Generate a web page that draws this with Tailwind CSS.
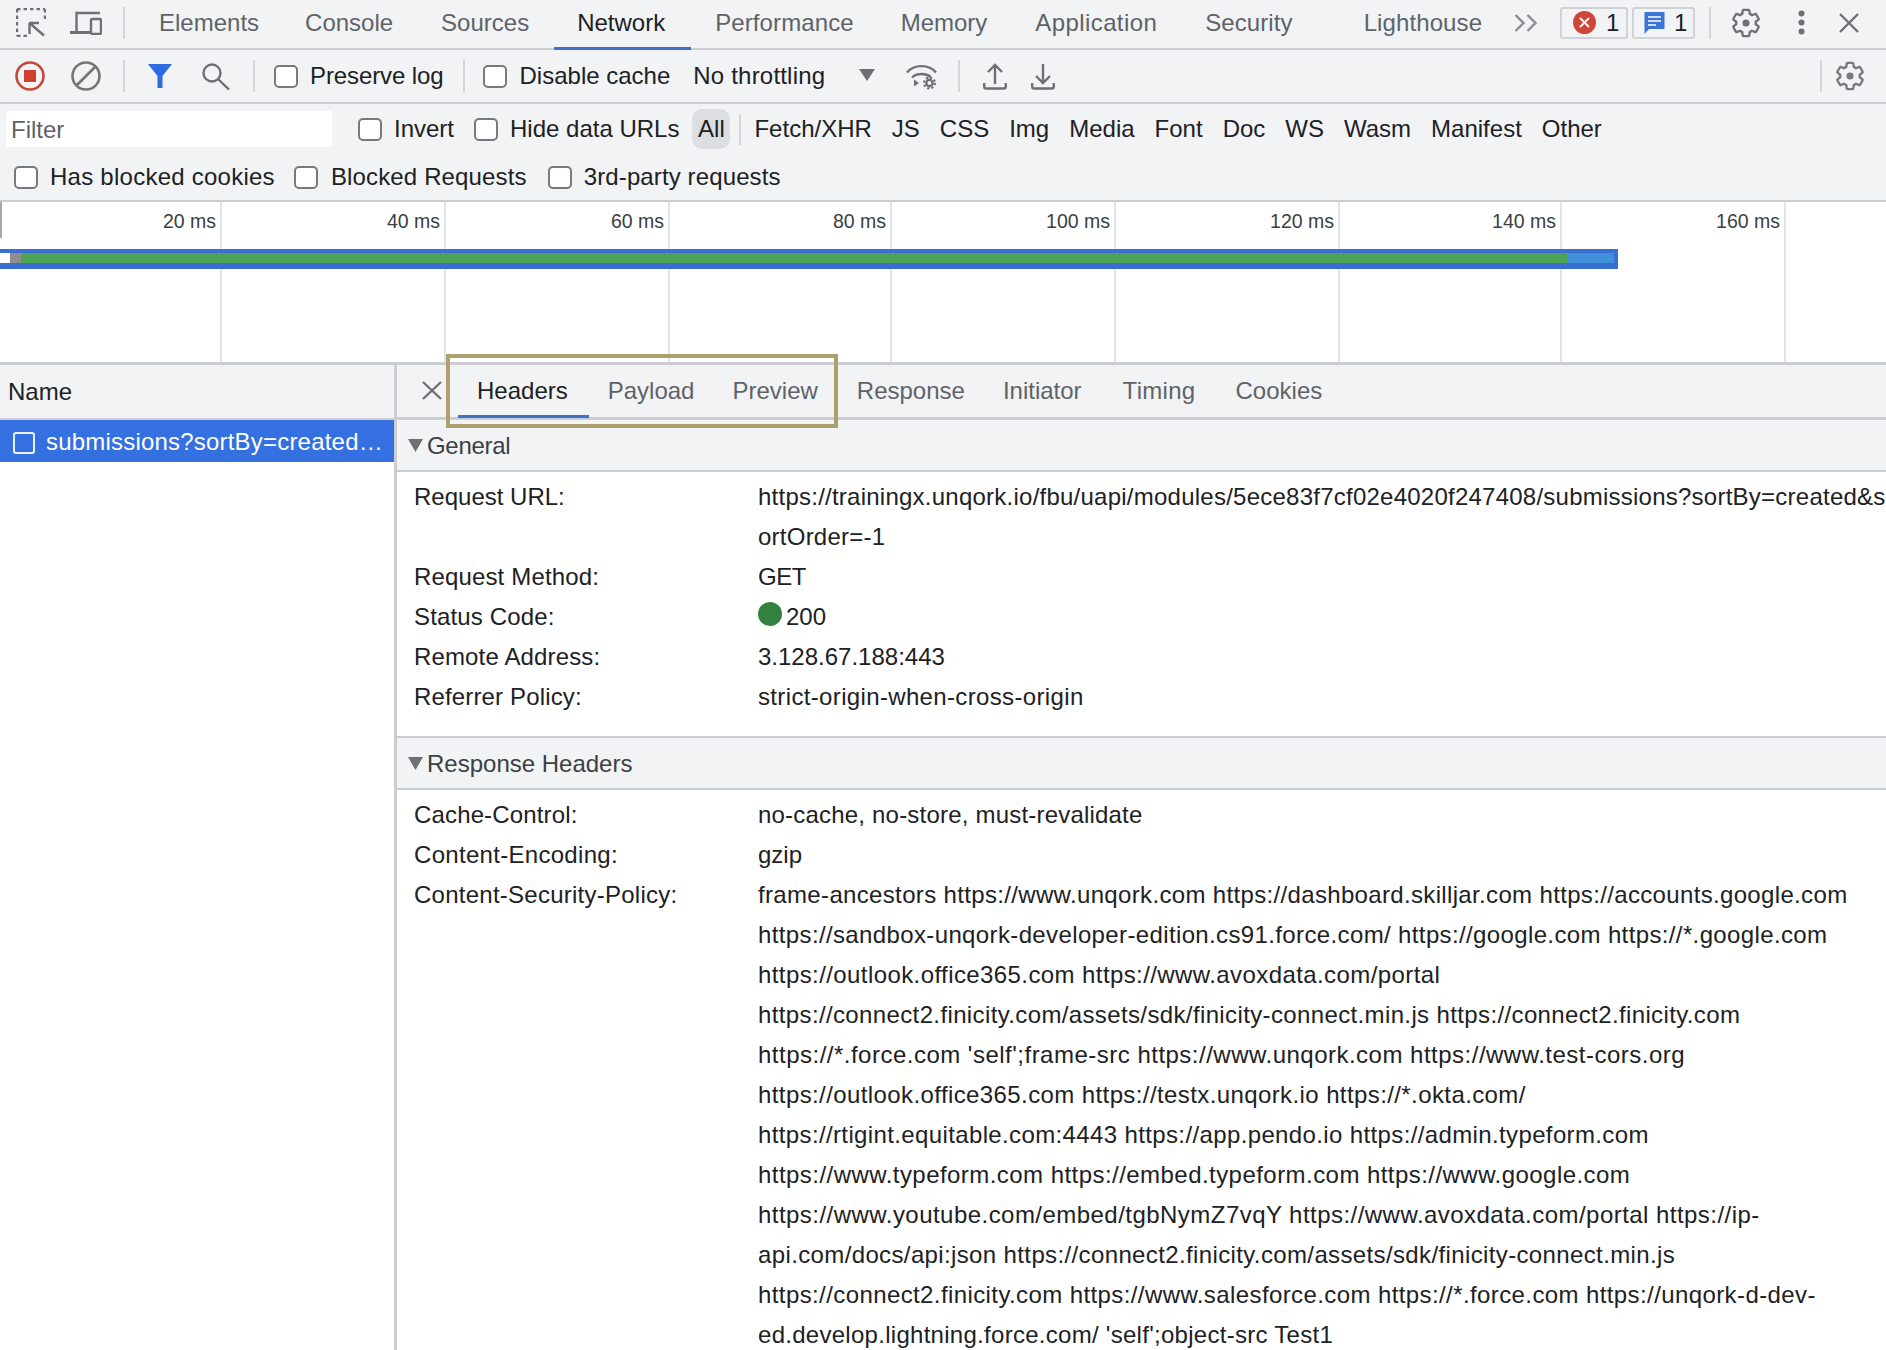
<!DOCTYPE html>
<html lang="en">
<head>
  <meta charset="UTF-8" />
  <title>DevTools Network panel</title>
  <script src="https://cdn.jsdelivr.net/npm/@tailwindcss/browser@4"></script>
</head>
<body class="bg-white">
<div class="relative w-[1886px] h-[1350px] overflow-hidden font-['Liberation_Sans',Arial,sans-serif] text-[24px] leading-none text-[#202124] whitespace-nowrap">

  <!-- Top tab bar -->
  <div class="flex items-center h-[50px] pb-[3px] bg-[#f1f3f5] border-b-2 border-[#cbcdd1] text-[#5f6368]">
    <svg class="ml-[16px] shrink-0" width="30" height="29" viewBox="0 0 30 29" fill="none" stroke="#6e7074" stroke-width="2.4">
      <path d="M1 1h28M1 1v27M29 1v12M1 28h10" stroke-dasharray="3.5 3"/>
      <path d="M13 15h10M13.500 15v11M14 15.500l14 12" stroke="#6e7074"/>
    </svg>
    <svg class="ml-[24px] shrink-0" width="32" height="24" viewBox="0 0 32 24" fill="none" stroke="#6e7074" stroke-width="2.400">
      <path d="M30 2H6.500v19"/>
      <path d="M0 21.500h20" stroke-width="3"/>
      <rect x="21" y="8" width="10" height="15" rx="1.500"/>
    </svg>
    <div class="ml-[21px] w-[2px] h-[32px] bg-[#d3d5d8]"></div>
    <span class="ml-[34px]">Elements</span>
    <span class="ml-[46px]">Console</span>
    <span class="ml-[48px]">Sources</span>
    <span class="relative self-stretch flex items-center ml-[48px] text-[#202124]">Network<span class="absolute -bottom-[5px] -left-[23px] -right-[26px] h-[3px] bg-[#3e6fc9]"></span></span>
    <span class="ml-[50px] tracking-[0.1px]">Performance</span>
    <span class="ml-[47px]">Memory</span>
    <span class="ml-[48px] tracking-[0.4px]">Application</span>
    <span class="ml-[48px] tracking-[0.1px]">Security</span>
    <span class="ml-[71px] tracking-[0.1px]">Lighthouse</span>
    <svg class="ml-[32px] shrink-0" width="24" height="18" viewBox="0 0 24 18" fill="none" stroke="#8a8c90" stroke-width="2.400">
      <path d="M1.500 1l8 8-8 8M13.500 1l8 8-8 8"/>
    </svg>
    <div class="ml-[22px] w-[68px] h-[32px] flex items-center border-2 border-[#d0d2d5] rounded-[3px] text-[#202124]">
      <svg class="ml-[11px] shrink-0" width="23" height="23" viewBox="0 0 23 23">
        <circle cx="11.500" cy="11.500" r="11.500" fill="#d0453a"/>
        <path d="M7 7l9 9M16 7l-9 9" stroke="#fff" stroke-width="1.800"/>
      </svg>
      <span class="ml-[10px]">1</span>
    </div>
    <div class="ml-[4px] w-[63px] h-[32px] flex items-center border-2 border-[#d0d2d5] rounded-[3px] text-[#202124]">
      <svg class="ml-[10px] shrink-0" width="21" height="24" viewBox="0 0 21 24">
        <path d="M1.500 1h18a1 1 0 0 1 1 1v15a1 1 0 0 1-1 1H5l-4.500 5V2a1 1 0 0 1 1-1z" fill="#3b73d9"/>
        <path d="M4 6h13M4 10h13M4 14h8" stroke="#fff" stroke-width="1.600"/>
      </svg>
      <span class="ml-[9px]">1</span>
    </div>
    <div class="ml-[14px] w-[2px] h-[32px] bg-[#d3d5d8]"></div>
    <svg class="ml-[20px] shrink-0" width="30" height="30" viewBox="1.500 1 21 22">
      <path d="M19.140 12.940c.04-.3.06-.61.06-.94 0-.32-.02-.64-.07-.94l2.030-1.580c.18-.14.23-.41.12-.61l-1.920-3.320c-.12-.22-.37-.29-.59-.22l-2.390.96c-.5-.38-1.030-.7-1.620-.94l-.36-2.540c-.04-.24-.24-.41-.48-.41h-3.840c-.24 0-.43.17-.47.41l-.36 2.540c-.59.24-1.130.57-1.620.94l-2.390-.96c-.22-.08-.47 0-.59.22L2.740 8.870c-.12.21-.08.47.12.61l2.030 1.580c-.05.3-.09.63-.09.94s.02.64.07.94l-2.030 1.580c-.18.14-.23.41-.12.61l1.920 3.320c.12.22.37.29.59.22l2.390-.96c.5.38 1.030.7 1.620.94l.36 2.540c.05.24.24.41.48.41h3.840c.24 0 .44-.17.47-.41l.36-2.540c.59-.24 1.130-.56 1.620-.94l2.390.96c.22.08.47 0 .59-.22l1.920-3.320c.12-.22.07-.47-.12-.61l-2.010-1.580z" fill="none" stroke="#6e7074" stroke-width="1.700"/>
      <circle cx="12" cy="12" r="2.600" fill="#6e7074"/>
    </svg>
    <svg class="ml-[37px] shrink-0" width="7" height="25" viewBox="0 0 7 25" fill="#6e7074">
      <circle cx="3.500" cy="3.500" r="3"/><circle cx="3.500" cy="12.500" r="3"/><circle cx="3.500" cy="21.500" r="3"/>
    </svg>
    <svg class="ml-[34px] shrink-0" width="20" height="20" viewBox="0 0 20 20" fill="none" stroke="#6e7074" stroke-width="2.400">
      <path d="M1 1l18 18M19 1L1 19"/>
    </svg>
  </div>

  <!-- Record / throttling toolbar -->
  <div class="flex items-center h-[54px] bg-[#f1f3f5] border-b-2 border-[#cbcdd1]">
    <svg class="ml-[15px] shrink-0" width="30" height="30" viewBox="0 0 30 30">
      <circle cx="15" cy="15" r="13.500" fill="none" stroke="#c5493a" stroke-width="2.600"/>
      <rect x="9" y="9" width="12" height="12" fill="#d0402f"/>
    </svg>
    <svg class="ml-[26px] shrink-0" width="30" height="30" viewBox="0 0 30 30" fill="none" stroke="#757575" stroke-width="2.600">
      <circle cx="15" cy="15" r="13.500"/>
      <path d="M24.500 5.500l-19 19"/>
    </svg>
    <div class="ml-[22px] w-[2px] h-[32px] bg-[#d3d5d8]"></div>
    <svg class="ml-[23px] shrink-0" width="24" height="24" viewBox="0 0 24 24">
      <path d="M0 0h24L14.500 12v12h-5V12z" fill="#2f6be0"/>
    </svg>
    <svg class="ml-[30px] shrink-0" width="28" height="27" viewBox="0 0 28 27" fill="none" stroke="#6e7074" stroke-width="2.400">
      <circle cx="10" cy="10" r="8.500"/>
      <path d="M16 16l11 10.500"/>
    </svg>
    <div class="ml-[23px] w-[2px] h-[32px] bg-[#d3d5d8]"></div>
    <div class="ml-[19px] w-[24px] h-[23px] bg-white border-2 border-[#77797c] rounded-[5px]"></div>
    <span class="ml-[12px] tracking-[-0.1px]">Preserve log</span>
    <div class="ml-[19px] w-[2px] h-[32px] bg-[#d3d5d8]"></div>
    <div class="ml-[18px] w-[24px] h-[23px] bg-white border-2 border-[#77797c] rounded-[5px]"></div>
    <span class="ml-[13px]">Disable cache</span>
    <span class="ml-[23px] tracking-[0.2px]">No throttling</span>
    <svg class="ml-[34px] shrink-0 -mt-[2px]" width="16" height="12" viewBox="0 0 16 12"><path d="M0 0h16L8 12z" fill="#6e7074"/></svg>
    <svg class="ml-[31px] shrink-0" width="31" height="27" viewBox="0 0 31 27" fill="none" stroke="#6e7074" stroke-width="2.400">
      <path d="M1 9.500C8 1 23 1 30 9.500"/>
      <path d="M6 14.500c4.500-4.500 14-4.500 18.500-.5"/>
      <path d="M13 20l-5-3.500v7z" fill="#6e7074" stroke="none"/>
      <circle cx="23.500" cy="20" r="5.500" stroke-width="2" stroke-dasharray="2.200 2.100"/>
      <circle cx="23.500" cy="20" r="3.200" stroke-width="2.400"/>
    </svg>
    <div class="ml-[21px] w-[2px] h-[32px] bg-[#d3d5d8]"></div>
    <svg class="ml-[23px] shrink-0" width="24" height="27" viewBox="0 0 24 27" fill="none" stroke="#6e7074" stroke-width="2.400">
      <path d="M12 21V2M5 9l7-7 7 7M1.200 20v3.500a2 2 0 0 0 2 2h17.600a2 2 0 0 0 2-2V20"/>
    </svg>
    <svg class="ml-[24px] shrink-0" width="24" height="27" viewBox="0 0 24 27" fill="none" stroke="#6e7074" stroke-width="2.400">
      <path d="M12 1v19M5 13l7 7 7-7M1.200 20v3.500a2 2 0 0 0 2 2h17.600a2 2 0 0 0 2-2V20"/>
    </svg>
    <div class="ml-auto w-[2px] h-[32px] bg-[#d3d5d8]"></div>
    <svg class="ml-[13px] mr-[21px] shrink-0" width="30" height="30" viewBox="1.500 1 21 22">
      <path d="M19.140 12.940c.04-.3.06-.61.06-.94 0-.32-.02-.64-.07-.94l2.030-1.580c.18-.14.23-.41.12-.61l-1.920-3.320c-.12-.22-.37-.29-.59-.22l-2.390.96c-.5-.38-1.030-.7-1.620-.94l-.36-2.540c-.04-.24-.24-.41-.48-.41h-3.840c-.24 0-.43.17-.47.41l-.36 2.540c-.59.24-1.130.57-1.620.94l-2.390-.96c-.22-.08-.47 0-.59.22L2.740 8.870c-.12.21-.08.47.12.61l2.030 1.580c-.05.3-.09.63-.09.94s.02.64.07.94l-2.030 1.580c-.18.14-.23.41-.12.61l1.920 3.320c.12.22.37.29.59.22l2.390-.96c.5.38 1.030.7 1.620.94l.36 2.540c.05.24.24.41.48.41h3.840c.24 0 .44-.17.47-.41l.36-2.540c.59-.24 1.130-.56 1.620-.94l2.390.96c.22.08.47 0 .59-.22l1.920-3.320c.12-.22.07-.47-.12-.61l-2.010-1.580z" fill="none" stroke="#77797c" stroke-width="1.700"/>
      <circle cx="12" cy="12" r="2.600" fill="#77797c"/>
    </svg>
  </div>

  <!-- Filter row -->
  <div class="flex items-center h-[50px] bg-[#f1f3f5]">
    <div class="ml-[6px] w-[326px] h-[36px] bg-white pl-[5px] pt-[2px] flex items-center text-[#5f6368]">Filter</div>
    <div class="ml-[26px] w-[24px] h-[23px] bg-white border-2 border-[#77797c] rounded-[5px]"></div>
    <span class="ml-[12px]">Invert</span>
    <div class="ml-[20px] w-[24px] h-[23px] bg-white border-2 border-[#77797c] rounded-[5px]"></div>
    <span class="ml-[12px]">Hide data URLs</span>
    <span class="ml-[13px] w-[38px] h-[40px] flex items-center justify-center bg-[#dcdee1] rounded-[10px]">All</span>
    <div class="ml-[9px] w-[2px] h-[31px] bg-[#d3d5d8]"></div>
    <div class="ml-[13px] flex gap-[20px]">
      <span>Fetch/XHR</span><span>JS</span><span>CSS</span><span>Img</span><span>Media</span><span>Font</span><span>Doc</span><span>WS</span><span>Wasm</span><span>Manifest</span><span>Other</span>
    </div>
  </div>

  <!-- Request type filters -->
  <div class="flex items-center h-[48px] bg-[#f1f3f5] border-b-2 border-[#cbcdd1]">
    <div class="ml-[14px] w-[24px] h-[23px] bg-white border-2 border-[#77797c] rounded-[5px]"></div>
    <span class="ml-[12px] tracking-[0.25px]">Has blocked cookies</span>
    <div class="ml-[19px] w-[24px] h-[23px] bg-white border-2 border-[#77797c] rounded-[5px]"></div>
    <span class="ml-[13px] tracking-[0.15px]">Blocked Requests</span>
    <div class="ml-[21px] w-[24px] h-[23px] bg-white border-2 border-[#77797c] rounded-[5px]"></div>
    <span class="ml-[12px] tracking-[0.12px]">3rd-party requests</span>
  </div>

  <!-- Overview timeline -->
  <div class="relative flex h-[160px] bg-white text-[19.500px] text-[#3c4043]">
    <div class="w-[222px] shrink-0 border-r-2 border-[#e2e3e6] pt-[10px] pr-[4px] text-right">20 ms</div>
    <div class="w-[224px] shrink-0 border-r-2 border-[#e2e3e6] pt-[10px] pr-[4px] text-right">40 ms</div>
    <div class="w-[224px] shrink-0 border-r-2 border-[#e2e3e6] pt-[10px] pr-[4px] text-right">60 ms</div>
    <div class="w-[222px] shrink-0 border-r-2 border-[#e2e3e6] pt-[10px] pr-[4px] text-right">80 ms</div>
    <div class="w-[224px] shrink-0 border-r-2 border-[#e2e3e6] pt-[10px] pr-[4px] text-right">100 ms</div>
    <div class="w-[224px] shrink-0 border-r-2 border-[#e2e3e6] pt-[10px] pr-[4px] text-right">120 ms</div>
    <div class="w-[222px] shrink-0 border-r-2 border-[#e2e3e6] pt-[10px] pr-[4px] text-right">140 ms</div>
    <div class="w-[224px] shrink-0 border-r-2 border-[#e2e3e6] pt-[10px] pr-[4px] text-right">160 ms</div>
    <div class="absolute left-0 top-0 w-[2px] h-[36px] bg-[#a8a8a8]"></div>
    <div class="absolute left-0 top-[47px] w-[1618px] h-[20px] bg-[#3a6fd1] pt-[4px]">
      <div class="flex h-[10px] w-[1614px]">
        <div class="w-[10px] bg-white"></div>
        <div class="w-[11px] bg-[#8e8e8e]"></div>
        <div class="w-[1547px] bg-[#4ca352]"></div>
        <div class="flex-1 bg-[#4091d9]"></div>
      </div>
    </div>
  </div>
  <div class="h-[3px] bg-[#cbcdd1]"></div>

  <!-- Lower split -->
  <div class="flex">
    <!-- Request list -->
    <div class="w-[397px] h-[985px] shrink-0 border-r-[3px] border-[#cbcdd1]">
      <div class="h-[55px] flex items-center pl-[8px] bg-[#f1f3f5] border-b-2 border-[#cbcdd1]">Name</div>
      <div class="h-[42px] flex items-center bg-[#3470df] text-white">
        <div class="ml-[13px] mt-[3px] w-[22px] h-[22px] border-2 border-white/90 rounded-[3px]"></div>
        <span class="ml-[11px] pt-[1px] tracking-[0.2px]">submissions?sortBy=created…</span>
      </div>
    </div>

    <!-- Request details -->
    <div class="flex-1 min-w-0">
      <div class="flex items-center h-[55px] pb-[1px] bg-[#f1f3f5] border-b-[3px] border-[#cbcdd1] text-[#5f6368]">
        <svg class="ml-[25px] shrink-0" width="20" height="19" viewBox="0 0 20 19" fill="none" stroke="#6e7074" stroke-width="2.400">
          <path d="M1 1l18 17M19 1L1 18"/>
        </svg>
        <span class="relative self-stretch flex items-center ml-[35px] text-[#202124]">Headers<span class="absolute -bottom-[2px] -left-[19px] -right-[21px] h-[3px] bg-[#3e6fc9]"></span></span>
        <span class="ml-[40px]">Payload</span>
        <span class="ml-[38px]">Preview</span>
        <span class="ml-[39px]">Response</span>
        <span class="ml-[38px]">Initiator</span>
        <span class="ml-[41px] tracking-[0.3px]">Timing</span>
        <span class="ml-[40px]">Cookies</span>
      </div>

      <div class="flex items-center h-[52px] pt-[1px] bg-[#f1f3f5] border-b-2 border-[#cbcdd1] text-[#3c4043]">
        <svg class="ml-[11px] shrink-0" width="15" height="13" viewBox="0 0 15 13"><path d="M0 0h15L7.500 13z" fill="#6e7074"/></svg>
        <span class="ml-[4px] tracking-[-0.3px]">General</span>
      </div>
      <div class="grid grid-cols-[344px_1fr] pl-[17px] pt-[5px] pb-[19px] leading-[40px]">
        <div>Request URL:</div><div class="tracking-[0.24px]">https://trainingx.unqork.io/fbu/uapi/modules/5ece83f7cf02e4020f247408/submissions?sortBy=created&amp;s<br>ortOrder=-1</div>
        <div class="tracking-[0.15px]">Request Method:</div><div class="tracking-[-0.5px]">GET</div>
        <div class="tracking-[0.15px]">Status Code:</div><div class="flex items-center"><span class="w-[24px] h-[24px] rounded-full bg-[#34803f] -mt-[6px] mr-[4px]"></span>200</div>
        <div class="tracking-[0.15px]">Remote Address:</div><div>3.128.67.188:443</div>
        <div class="tracking-[0.15px]">Referrer Policy:</div><div class="tracking-[0.35px]">strict-origin-when-cross-origin</div>
      </div>

      <div class="flex items-center h-[54px] pt-[1px] bg-[#f1f3f5] border-y-2 border-[#cbcdd1] text-[#3c4043]">
        <svg class="ml-[11px] shrink-0" width="15" height="13" viewBox="0 0 15 13"><path d="M0 0h15L7.500 13z" fill="#6e7074"/></svg>
        <span class="ml-[4px]">Response Headers</span>
      </div>
      <div class="grid grid-cols-[344px_1fr] pl-[17px] pt-[5px] leading-[40px]">
        <div class="tracking-[0.15px]">Cache-Control:</div><div class="tracking-[0.2px]">no-cache, no-store, must-revalidate</div>
        <div class="tracking-[0.3px]">Content-Encoding:</div><div>gzip</div>
        <div class="tracking-[0.25px]">Content-Security-Policy:</div>
        <div>
          <div class="tracking-[0.34px]">frame-ancestors https://www.unqork.com https://dashboard.skilljar.com https://accounts.google.com</div>
          <div class="tracking-[0.37px]">https://sandbox-unqork-developer-edition.cs91.force.com/ https://google.com https://*.google.com</div>
          <div class="tracking-[0.41px]">https://outlook.office365.com https://www.avoxdata.com/portal</div>
          <div class="tracking-[0.37px]">https://connect2.finicity.com/assets/sdk/finicity-connect.min.js https://connect2.finicity.com</div>
          <div class="tracking-[0.49px]">https://*.force.com 'self';frame-src https://www.unqork.com https://www.test-cors.org</div>
          <div class="tracking-[0.4px]">https://outlook.office365.com https://testx.unqork.io https://*.okta.com/</div>
          <div class="tracking-[0.37px]">https://rtigint.equitable.com:4443 https://app.pendo.io https://admin.typeform.com</div>
          <div class="tracking-[0.45px]">https://www.typeform.com https://embed.typeform.com https://www.google.com</div>
          <div class="tracking-[0.46px]">https://www.youtube.com/embed/tgbNymZ7vqY https://www.avoxdata.com/portal https://ip-</div>
          <div class="tracking-[0.37px]">api.com/docs/api:json https://connect2.finicity.com/assets/sdk/finicity-connect.min.js</div>
          <div class="tracking-[0.4px]">https://connect2.finicity.com https://www.salesforce.com https://*.force.com https://unqork-d-dev-</div>
          <div class="tracking-[0.28px]">ed.develop.lightning.force.com/ 'self';object-src Test1</div>
        </div>
      </div>
    </div>
  </div>

  <!-- Highlight box drawn over the tabs -->
  <div class="absolute left-[446px] top-[354px] w-[392px] h-[74px] border-4 border-[#ad9f6e]"></div>
</div>
</body>
</html>
